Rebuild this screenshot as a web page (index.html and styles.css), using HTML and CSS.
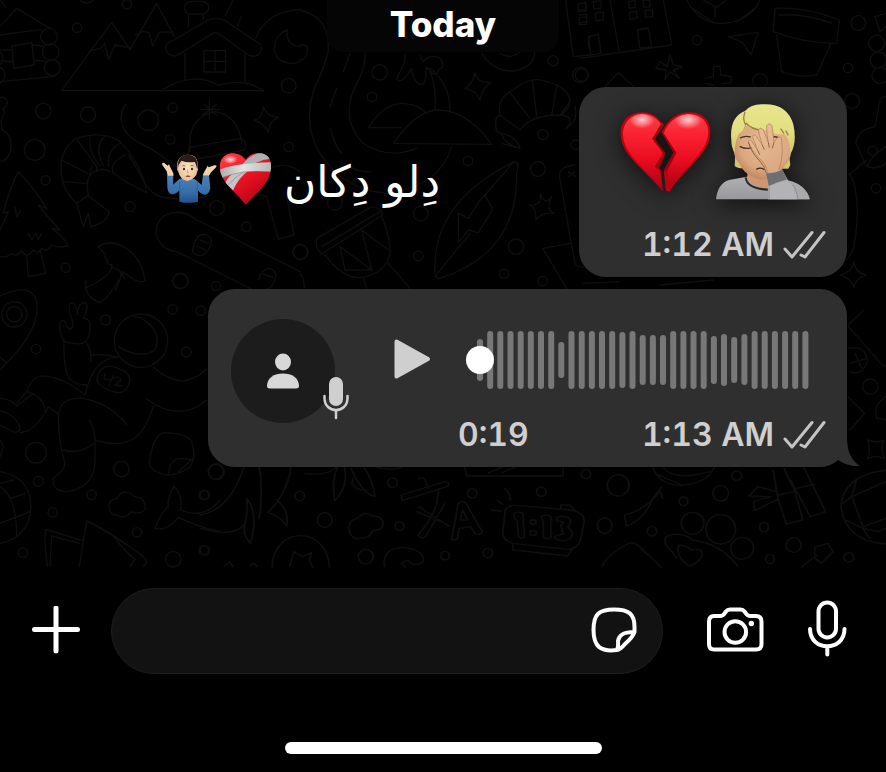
FILE: index.html
```html
<!DOCTYPE html>
<html lang="en">
<head>
<meta charset="utf-8">
<meta name="viewport" content="width=device-width, initial-scale=1">
<title>Chat</title>
<link rel="stylesheet" href="styles.css">
</head>
<body>
<main class="chat">
  <svg class="wallpaper" viewBox="0 0 886 568" preserveAspectRatio="xMidYMin slice" aria-hidden="true">
    <!-- top left: cabin, mountains, house, shrimp, tree -->
    <g transform="scale(.33333)" stroke-width="4">
      <path d="M0 80L50 25L150 85M0 105L125 88M35 138L95 128L103 195L42 205ZM0 150H35M0 182L38 186M97 135L130 138M103 180L138 184M0 245L165 229M0 0L18 22"/>
      <circle cx="147" cy="110" r="25"/><circle cx="152" cy="156" r="25"/><circle cx="157" cy="203" r="24"/><circle cx="-16" cy="175" r="25"/><circle cx="-10" cy="225" r="25"/>
      <path d="M185 272L272 152L335 68L390 148L470 10L522 108M272 152L300 145L314 130L326 178L345 135L385 142M405 106L428 94L447 98L458 138L478 96L518 96M185 272H790C750 245 710 240 655 256C610 228 550 230 490 268"/>
      <path d="M500 132L625 60Q650 48 675 62L780 132Q790 150 775 165Q765 172 745 165L655 100Q645 95 635 102L530 167Q510 170 500 155Q495 143 500 132ZM555 160V240M735 165V245M612 152H677V216H612ZM645 152V216M612 184H677M565 80V42M610 58V42M565 42Q550 35 556 15Q560 5 575 4H605Q625 5 626 22Q626 38 610 42ZM675 48L700 0M712 78L725 48"/>
      <path d="M768 112Q800 35 900 28M862 90C815 105 810 170 850 185Q875 195 900 185M862 90Q855 135 900 140"/>
      <circle cx="231" cy="83" r="14"/><circle cx="381" cy="13" r="14"/><circle cx="866" cy="257" r="22"/><circle cx="130" cy="333" r="23"/><circle cx="264" cy="344" r="23"/><circle cx="445" cy="361" r="31"/><circle cx="518" cy="323" r="14"/><circle cx="104" cy="450" r="31"/><circle cx="511" cy="418" r="14"/><circle cx="866" cy="441" r="14"/><circle cx="137" cy="541" r="14"/><circle cx="390" cy="620" r="15"/><circle cx="651" cy="624" r="22"/><circle cx="739" cy="680" r="14"/><circle cx="541" cy="843" r="22"/><circle cx="197" cy="803" r="14"/><circle cx="648" cy="858" r="14"/><circle cx="900" cy="756" r="22"/>
      <path d="M240 0Q260 18 282 0M0 292Q22 290 22 310Q20 320 8 325Q18 330 6 355Q0 370 8 390Q38 405 32 450Q25 480 0 485"/>
      <path d="M378 312C350 350 360 400 420 430C480 455 510 490 550 515M385 465C420 510 430 570 480 590Q540 605 620 590"/>
      <path d="M570 455Q560 350 645 335Q715 345 725 430M568 442L722 415Q745 425 733 450L578 480Q560 465 568 442M610 312L650 345M652 312L608 345M628 300V358M600 328H658"/>
      <path d="M790 320Q800 350 835 352Q805 365 805 398Q795 370 762 362Q790 350 790 320"/>
      <path d="M230 610C170 560 165 450 230 415Q310 390 360 425Q430 500 440 578Q380 550 340 520Q325 490 380 462M230 610L265 585Q255 540 275 520Q300 500 330 515M230 610L250 680L265 640L272 680Q320 670 328 635L265 588M185 480L262 520M190 545L258 550M232 420L290 500M270 410Q265 460 300 498M315 408Q280 440 310 496M360 430Q320 450 325 500M268 525L275 500M290 515V498"/>
      <path d="M55 515Q100 560 140 625L115 615Q150 660 180 690L155 685Q200 720 203 738Q170 745 155 735Q140 760 125 745Q115 765 100 750Q80 780 65 752Q50 775 35 760Q20 775 0 770M55 515Q30 560 10 640L25 635L0 690M80 765L85 830L137 820L122 755M45 620L50 650L62 630M85 700L95 720L108 700L115 718L125 700"/>
      <path d="M295 740C330 710 420 740 435 840Q430 850 405 840L365 815Q370 835 375 838L355 810Q335 805 335 795Q315 790 322 780Q310 770 318 765ZM335 795Q340 825 255 865M365 815Q360 850 345 870"/>
      <path d="M530 637Q470 640 468 700Q480 750 530 755L760 870M530 637Q560 635 590 660L900 815M580 740Q590 700 615 703Q640 710 632 735Q615 775 590 765Q572 760 580 740M598 720L625 730M590 738L618 750M775 840Q785 805 810 805Q835 815 825 840Q810 875 785 870M790 822L818 832"/>
      <path d="M800 510Q850 480 900 515M765 580L800 590L835 718L882 705L860 590"/>
    </g>
    <!-- top centre: road, beach, shell, drum, surfboard -->
    <g transform="translate(300) scale(.33333)" stroke-width="4">
      <path d="M0 30Q90 50 85 150Q75 200 45 260Q5 370 60 460Q130 570 260 580Q420 560 455 440M195 155Q200 200 165 260Q120 360 190 430Q260 480 350 445M150 160L130 215M110 265L90 320M92 385Q100 430 125 460M0 135Q30 130 20 160Q15 180 0 180M150 500Q180 520 215 515"/>
      <path d="M205 383Q250 310 310 310Q360 315 380 340M205 383H305M280 430Q350 330 415 330Q500 330 575 433ZM405 330Q410 250 385 205M450 335Q450 250 390 205M315 165Q320 180 290 235Q300 260 335 205Q340 255 370 253Q380 240 378 200Q410 240 415 210Q440 200 420 175Q390 160 370 185L360 165"/>
      <path d="M545 160Q580 215 640 213Q700 205 705 155M600 160Q630 180 660 155M797 0L820 170L870 165M835 10H858V33H835ZM838 52H860V73H838ZM870 150Q860 130 870 110"/>
      <circle cx="239" cy="217" r="23"/><circle cx="216" cy="291" r="14"/><circle cx="759" cy="182" r="15"/><circle cx="841" cy="225" r="23"/><circle cx="729" cy="404" r="15"/><circle cx="504" cy="483" r="14"/><circle cx="714" cy="507" r="22"/><circle cx="362" cy="641" r="22"/><circle cx="105" cy="608" r="22"/><circle cx="355" cy="768" r="14"/><circle cx="648" cy="740" r="23"/><circle cx="612" cy="821" r="14"/><circle cx="728" cy="843" r="14"/><circle cx="2" cy="756" r="22"/><circle cx="827" cy="434" r="14"/>
      <path d="M525 218Q530 250 573 248Q545 265 540 300Q528 270 495 265Q520 250 525 218M722 582Q735 620 755 590Q735 630 763 640Q725 635 708 660Q710 620 688 615Q725 620 722 582"/>
      <path d="M660 445Q610 430 605 400L590 395Q580 350 600 345Q590 290 640 270Q690 225 740 245Q800 260 810 300Q810 330 780 345Q830 350 800 385M605 400Q650 410 660 445L605 430M600 345L660 390M628 275L690 355M697 240L710 350M770 260L755 345M810 305L780 345M660 390Q690 345 780 345M825 320Q835 370 800 380"/>
      <path d="M640 487Q660 480 650 520Q655 760 420 835Q400 840 405 790Q410 600 640 487M640 487L555 585M405 830L510 700M555 585L578 628L535 698L505 690L475 728V640L505 655L540 600Z"/>
      <path d="M50 715L215 620Q245 625 248 645L65 762Q45 745 50 715M65 740L245 632M75 765Q130 840 190 832Q275 810 270 740Q260 680 245 650M120 740L135 810L215 810L185 690M120 740L215 810M185 690L265 750M190 835L200 865M265 790L330 865M0 820Q15 840 12 865"/>
      <path d="M825 495Q770 500 780 540L825 790Q835 805 850 800M805 515L825 530M823 515L807 530M728 745L810 730M728 745L800 865"/>
    </g>
    <!-- top right: building, globe, flower pot, guitar -->
    <g transform="translate(580) scale(.33333)" stroke-width="4">
      <path d="M0 175L275 135L250 0M90 0L118 155M25 110L55 103L63 160L32 165ZM172 90L205 84L215 140L180 144ZM0 10L18 8V28L0 30M40 5L63 2V25L42 27ZM0 45L20 42V65L0 68M45 40L70 37V60L48 62ZM145 5L165 2V22L148 25ZM190 0H210V20L192 22ZM148 37L170 34V55L150 58ZM195 32L218 30V50L197 52Z"/>
      <path d="M320 0Q360 75 430 70Q510 65 540 0M370 0L410 22L440 0M405 22V50M330 20L400 68M530 20L470 65M445 110L535 97L513 165L488 128ZM585 25Q680 20 778 60L770 130Q670 130 580 95ZM598 45Q680 40 755 70M590 105L605 215Q660 235 710 225L752 132M885 50L918 40M885 50L900 95L918 80"/>
      <circle cx="351" cy="120" r="14"/><circle cx="835" cy="69" r="22"/><circle cx="804" cy="204" r="14"/><circle cx="5" cy="225" r="19"/><circle cx="540" cy="243" r="22"/><circle cx="816" cy="303" r="22"/><circle cx="888" cy="565" r="14"/><circle cx="878" cy="453" r="14"/><circle cx="890" cy="130" r="24"/><circle cx="895" cy="180" r="24"/><circle cx="900" cy="226" r="24"/>
      <path d="M262 200L270 165L280 195L308 200L280 210L298 235L270 215L255 240L258 210L228 205L240 185ZM75 260L115 218L160 258M375 235L400 230V200L420 198L422 225L455 230L452 248L425 250M400 255L375 250Z"/>
      <path d="M918 290Q895 290 895 330L885 380Q830 390 828 430L860 500Q890 510 918 490M860 480L805 525M808 520Q845 580 825 720Q820 760 800 780M860 500Q880 460 918 440M822 785Q825 820 860 825Q825 835 822 863Q815 835 780 825Q815 820 822 785"/>
      <path d="M240 855L400 840M10 850L120 845"/>
    </g>
    <!-- left: rocket, astronaut, tag, ball -->
    <g transform="translate(0 280) scale(.33333)" stroke-width="4">
      <path d="M0 48Q80 10 105 50Q130 110 60 205L0 270M0 232L20 248"/><circle cx="43" cy="103" r="38"/><circle cx="43" cy="103" r="23"/>
      <path d="M258 0Q250 50 300 68Q330 50 355 0"/>
      <path d="M190 180Q170 130 185 122Q195 115 200 140L210 148Q225 140 215 115Q200 75 215 68Q228 65 232 105Q235 65 255 68Q270 75 250 115Q275 115 270 150Q265 200 220 190Q200 190 190 180M192 180C190 280 200 315 260 315M258 185Q275 210 273 245M275 225Q300 220 355 232Q280 230 255 345Q180 285 120 288Q90 300 80 335L50 370M80 335Q135 350 135 400L145 380L175 403M130 405Q100 455 60 458M0 355Q30 355 50 378L100 340M0 392Q40 400 60 440Q60 460 40 455L0 435M175 405Q180 350 250 355Q330 370 380 433M175 405Q175 490 195 550Q195 570 160 595Q155 635 205 635Q285 620 285 540V475M190 510Q240 525 282 490M268 420Q280 440 285 475M285 480C380 510 430 480 460 378M440 357Q540 430 620 360M460 262C530 320 570 310 620 268"/>
      <circle cx="423" cy="182" r="80"/><path d="M355 200Q420 240 465 210Q485 160 440 125Q420 110 400 110M440 125Q480 160 470 200"/>
      <path d="M320 260Q340 255 375 275Q400 295 380 325Q370 340 350 338Q300 325 290 300Q295 265 320 260M315 280L312 297L333 300M340 285L328 315M340 295Q360 285 362 300L345 315L365 318"/>
      <path d="M490 458Q560 460 575 485Q590 530 570 560Q530 590 490 583Q440 570 450 535Q460 470 490 458M575 540Q510 520 505 583M535 575L575 540"/>
      <circle cx="108" cy="518" r="31"/><circle cx="364" cy="567" r="23"/><circle cx="317" cy="120" r="15"/><circle cx="108" cy="207" r="14"/><circle cx="518" cy="88" r="14"/><circle cx="602" cy="92" r="14"/><circle cx="559" cy="216" r="15"/><circle cx="541" cy="3" r="23"/><circle cx="115" cy="604" r="15"/><circle cx="275" cy="644" r="14"/><circle cx="158" cy="697" r="14"/><circle cx="411" cy="757" r="14"/><circle cx="615" cy="645" r="14"/><circle cx="69" cy="818" r="14"/><circle cx="615" cy="811" r="14"/><circle cx="520" cy="838" r="23"/><circle cx="649" cy="575" r="24"/>
      <path d="M0 575Q90 590 93 680Q90 770 0 790M0 610L40 600M0 620Q50 650 50 770M35 655L75 640M0 730L90 695M0 480L10 500L0 530"/>
      <path d="M330 690Q320 660 350 655Q370 620 405 650Q440 655 435 690Q415 705 395 695Q370 720 350 705Q330 705 330 690M142 860Q130 760 138 748L248 782M150 860L155 768L240 790M238 860L260 722L340 768Q370 810 405 838L390 860M260 722Q340 760 430 830Q450 845 430 858M340 768L380 795"/>
      <path d="M522 618Q500 660 505 680Q480 700 465 745Q500 755 535 712Q590 740 660 755M522 618Q550 650 542 690Q610 720 660 660"/>
    </g>
    <!-- right edge beside the voice message -->
    <g transform="translate(450 310) scale(.33333)" stroke-width="4">
      <path d="M1195 45L1240 0M1195 50L1280 145Q1300 175 1308 165M1195 115Q1250 105 1252 155Q1235 200 1200 185M1215 130L1235 175M1200 160L1250 145M1195 262L1243 310L1200 360M1308 260Q1270 280 1280 325L1308 330M1252 390Q1280 400 1300 392Q1290 415 1302 445Q1280 435 1252 445Q1265 420 1252 390"/><circle cx="1261" cy="230" r="23"/>
    </g>
    <!-- lower band: whale, letters, clock, bamboo, volleyball -->
    <g transform="translate(200 460) scale(.4375 .33333)" stroke-width="4">
      <path d="M100 20Q70 150 0 165M0 205Q80 235 103 190Q110 160 107 115Q135 160 115 250Q95 220 103 190M135 20Q145 90 135 175M208 20Q200 100 155 158M175 120Q205 150 198 198Q180 165 155 158"/>
      <path d="M240 40Q290 50 315 20Q300 60 308 122Q340 80 330 22M345 25Q370 100 400 110Q395 60 375 22M350 55Q340 80 370 90M400 20Q430 35 460 22"/>
      <path d="M340 205Q340 180 360 175Q375 150 395 168Q420 170 418 190Q420 210 395 212Q385 240 355 235Q340 225 340 205M165 322C165 200 290 190 296 322M205 320L215 275L235 290L255 278L250 300L258 322M422 320Q415 265 465 262Q515 270 510 305Q490 325 475 300L460 310L470 322M55 320L68 305L75 320M115 320Q120 300 130 320"/>
      <path d="M460 105L560 65Q575 70 565 80L462 122ZM500 55Q510 48 515 62L522 85M545 85Q545 160 498 225Q510 245 520 220L560 130M500 140L570 200M495 155L568 195M575 240L590 130Q600 118 608 130L645 215Q640 228 630 222L618 200L592 205L588 238ZM595 180L600 150L612 180Z"/>
      <path d="M718 136L850 150Q880 160 878 185L870 240Q860 270 840 268L715 250Q690 240 692 215L698 150Q705 135 718 136M715 252V270L840 288L850 268M825 145V135L845 135L858 152M697 85Q712 105 708 120M680 122L692 133M665 150L688 153M718 160Q725 152 738 160L742 230Q735 240 728 230L725 180Q715 178 718 160M755 180H768V192H755ZM755 212H768V225H755ZM780 170Q790 160 802 170V232Q795 242 785 232V190ZM818 170Q845 165 848 185Q845 195 840 200Q855 215 848 235Q830 250 810 235Q810 225 832 222Q825 205 825 195L832 188L815 182Z"/>
      <path d="M605 22L610 48H830V25M660 38L690 22M690 38L720 22M1035 22Q1050 75 1100 76Q1160 70 1175 22M1040 40L1100 75M1060 22Q1080 65 1165 35M1055 80L1035 115Q1015 180 975 198L970 165Q1020 150 1050 95M1050 90L1058 115M920 320Q925 290 980 250Q990 245 1000 255L1055 322M1068 260Q1050 225 1090 222Q1115 225 1125 240Q1190 250 1230 320M1068 260Q1080 275 1090 295M1095 255Q1120 260 1120 270Q1150 260 1148 285Q1140 310 1118 318Q1085 290 1095 255"/>
      <path d="M1310 30L1320 110L1340 192L1378 180L1360 95L1335 25M1350 60L1395 170L1430 155L1400 75L1380 22M1322 105L1360 95M1365 85L1405 72M1318 95L1275 80L1255 108L1305 110L1265 125L1268 152L1320 118M1405 262L1435 250L1447 275L1420 310L1405 295ZM1375 322L1410 285"/>
      <path d="M1568 30Q1470 45 1465 140Q1475 245 1568 252M1500 62L1490 110L1568 65M1490 110L1515 200L1568 175M1475 180L1515 205L1530 235M1490 110L1470 130M1515 205L1550 215L1568 205"/>
      <ellipse cx="36" cy="35" rx="17" ry="22"/><ellipse cx="9" cy="105" rx="11" ry="14"/><ellipse cx="228" cy="108" rx="11" ry="14"/><ellipse cx="285" cy="180" rx="17" ry="22"/><ellipse cx="440" cy="68" rx="11" ry="14"/><ellipse cx="456" cy="198" rx="10" ry="13"/><ellipse cx="379" cy="290" rx="17" ry="22"/><ellipse cx="560" cy="287" rx="10" ry="13"/><ellipse cx="622" cy="100" rx="11" ry="14"/><ellipse cx="658" cy="279" rx="11" ry="14"/><ellipse cx="780" cy="95" rx="11" ry="14"/><ellipse cx="882" cy="42" rx="11" ry="14"/><ellipse cx="956" cy="76" rx="25" ry="32"/><ellipse cx="925" cy="197" rx="17" ry="23"/><ellipse cx="1033" cy="214" rx="11" ry="14"/><ellipse cx="1105" cy="124" rx="10" ry="13"/><ellipse cx="1190" cy="100" rx="18" ry="23"/><ellipse cx="1227" cy="47" rx="11" ry="14"/><ellipse cx="1126" cy="190" rx="26" ry="33"/><ellipse cx="1190" cy="208" rx="34" ry="44"/><ellipse cx="1239" cy="265" rx="26" ry="33"/><ellipse cx="1289" cy="201" rx="10" ry="14"/><ellipse cx="1357" cy="255" rx="17" ry="22"/><ellipse cx="1303" cy="297" rx="10" ry="14"/><ellipse cx="1483" cy="292" rx="11" ry="14"/><ellipse cx="9" cy="271" rx="11" ry="14"/>
    </g>
  </svg>

  <h1 class="date">Today</h1>

  <section class="row">
    <p class="caption" dir="rtl">
      <span class="caption-text" lang="ur">دِلو دِکان</span>
      <span class="caption-emoji">
      <svg width="53" height="52" viewBox="200 66 159 156" role="img" aria-label="Mending heart">
        <defs>
          <linearGradient id="mh" x1="0" y1="0" x2=".7" y2="1"><stop offset="0" stop-color="#ff4a50"/><stop offset=".45" stop-color="#f51626"/><stop offset="1" stop-color="#b00014"/></linearGradient>
          <linearGradient id="band" x1="0" y1="0" x2="1" y2="0"><stop offset="0" stop-color="#a9abab"/><stop offset=".45" stop-color="#e2e3e3"/><stop offset="1" stop-color="#b4b5b6"/></linearGradient>
          <radialGradient id="shine"><stop offset="0" stop-color="#fff" stop-opacity=".85"/><stop offset="1" stop-color="#fff" stop-opacity="0"/></radialGradient>
          <clipPath id="mhc"><path d="M280 86C266 66 238 62 222 71C198 83 198 118 212 142C228 172 256 190 280 221C306 191 337 169 350 137C361 108 357 80 338 70C316 62 293 66 280 86Z"/></clipPath>
        </defs>
        <g clip-path="url(#mhc)">
          <rect x="195" y="60" width="170" height="170" fill="url(#mh)"/>
          <ellipse cx="234" cy="86" rx="22" ry="13" fill="url(#shine)"/>
          <path d="M268 102Q300 65 330 66L358 82L310 96L290 105Z" fill="#aeb0b2"/>
          <path d="M335 86L362 84V100L300 100Z" fill="#e01525"/>
          <path d="M288 119Q260 138 242 178L218 155Q230 135 245 124Z" fill="#c3c5c6"/>
          <path d="M200 117Q245 95 362 94V123Q270 113 205 142Z" fill="url(#band)"/>
          <path d="M203 142Q270 113 362 123M226 164Q245 140 276 121" fill="none" stroke="#7e4b50" stroke-width="1.5" opacity=".7"/>
        </g>
      </svg>
      <svg width="56" height="50" viewBox="30 72 168 150" role="img" aria-label="Man shrugging">
        <defs><linearGradient id="shirt" x1="0" y1="0" x2="0" y2="1"><stop offset="0" stop-color="#4b83b9"/><stop offset=".6" stop-color="#396fa8"/><stop offset="1" stop-color="#20518d"/></linearGradient><radialGradient id="skin"><stop offset="0" stop-color="#ffe5c5"/><stop offset="1" stop-color="#e8bd94"/></radialGradient></defs>
        <path d="M48 136L67 134L66 164L85 147Q109 139 131 147L152 165L156 134L174 137L178 175Q174 195 160 194Q148 192 141 181V215Q110 222 85 215V181Q76 194 60 193Q48 187 49 165Z" fill="url(#shirt)"/>
        <path d="M86 154L87 190M139 154L138 190" stroke="#285985" stroke-width="2"/>
        <path d="M50 137L47 124L34 105Q31 97 39 98L50 107L54 103L59 114L67 130V137ZM155 136L160 125L166 115L170 107L173 112L190 106Q201 105 194 113L179 128L174 137Z" fill="#f3d2aa"/>
        <path d="M94 138H124V147Q109 156 94 147Z" fill="#dcae86"/>
        <path d="M78 113Q76 78 107 74Q144 72 140 113Q143 116 139 124Q136 146 110 153Q86 147 82 125Q78 121 78 113Z" fill="url(#skin)"/>
        <path d="M80 117Q77 74 109 74Q145 75 139 118Q136 107 132 96Q105 98 91 92Q82 102 80 117Z" fill="#281c1b"/>
        <path d="M94 108Q98 105 103 108M118 108Q123 105 128 108" fill="none" stroke="#594033" stroke-width="2"/>
        <ellipse cx="99" cy="117" rx="3" ry="4" fill="#251c1c"/><ellipse cx="123" cy="117" rx="3" ry="4" fill="#251c1c"/><path d="M110 118L108 127H114" fill="none" stroke="#c59067" stroke-width="2"/><path d="M103 139Q110 134 119 139Q112 142 103 139Z" fill="#61221f"/>
      </svg>
      </span>
    </p>

    <article class="bubble bubble-emoji">
      <div class="emoji-pair">
        <svg width="94" height="84" viewBox="30 60 282 252" role="img" aria-label="Broken heart">
          <defs>
            <linearGradient id="bh" x1="0" y1="0" x2="0" y2="1"><stop offset="0" stop-color="#f8404a"/><stop offset=".25" stop-color="#fb2433"/><stop offset=".6" stop-color="#ea0d20"/><stop offset="1" stop-color="#a80012"/></linearGradient>
            <radialGradient id="gloss" cy=".3"><stop offset="0" stop-color="#fff" stop-opacity=".75"/><stop offset="1" stop-color="#fff" stop-opacity="0"/></radialGradient>
          </defs>
          <path d="M152 92C130 61 82 59 55 82C26 110 31 154 54 188C82 228 124 258 162 304L155 240L145 231L169 190L137 147L166 103Z" fill="#c5000e"/>
          <path d="M148 93C124 66 84 64 60 87C34 114 38 150 58 182C84 223 125 254 160 298L149 240L138 230L162 189L130 146L156 103Z" fill="url(#bh)"/>
          <path d="M158 127C182 75 222 60 262 69C310 83 313 135 290 174C262 220 210 256 181 305L171 301L164 242L194 188Z" fill="#c5000e"/>
          <path d="M164 129C186 80 223 66 258 74C302 86 307 132 285 170C257 216 210 251 181 300L176 242L202 188Z" fill="url(#bh)"/>
          <path d="M130 146L162 189L138 230L149 240L169 190L137 147L166 103L156 103ZM158 129L194 188L164 242L172 244L202 188L164 131Z" fill="#9d000b"/>
          <ellipse cx="99" cy="100" rx="38" ry="27" fill="url(#gloss)"/><ellipse cx="237" cy="101" rx="42" ry="28" fill="url(#gloss)"/>
        </svg>
        <svg width="97" height="97" viewBox="315 40 291 291" role="img" aria-label="Person facepalming">
          <defs>
            <linearGradient id="hair" x1="0" y1="0" x2="0" y2="1"><stop offset="0" stop-color="#e9e58e"/><stop offset=".55" stop-color="#e2de80"/><stop offset="1" stop-color="#d2c46d"/></linearGradient>
            <radialGradient id="face" cx=".55" cy=".4" r=".65"><stop offset="0" stop-color="#e8bd93"/><stop offset=".65" stop-color="#dba87f"/><stop offset="1" stop-color="#bb7f5c"/></radialGradient>
            <linearGradient id="hand" x1="0" y1="0" x2=".5" y2="1"><stop offset="0" stop-color="#edc298"/><stop offset="1" stop-color="#dbaa84"/></linearGradient>
            <linearGradient id="tee" x1="0" y1="0" x2="0" y2="1"><stop offset="0" stop-color="#b0b0b2"/><stop offset="1" stop-color="#98989b"/></linearGradient>
          </defs>
          <path d="M376 190L374 229Q383 237 402 236L535 237L541 226L536 185Z" fill="#d2c46d"/>
          <path d="M318 329Q323 282 357 271L410 261L490 263L548 280Q587 287 599 329Z" fill="url(#tee)"/>
          <path d="M414 240H477V294Q424 294 411 265Z" fill="#cf966f"/>
          <path d="M407 263Q410 298 479 300" fill="none" stroke="#29292b" stroke-width="6"/>
          <path d="M370 170Q367 91 458 90Q548 92 545 180Q541 213 526 225Q501 268 458 270Q406 263 387 220Q370 203 370 170Z" fill="url(#face)"/>
          <path d="M364 152Q357 83 405 64Q424 42 460 44Q531 41 550 104Q562 160 541 193Q539 145 523 133Q493 138 461 119Q430 124 405 105Q403 122 387 132Q375 152 374 190Q364 173 364 152Z" fill="url(#hair)"/>
          <path d="M405 67Q396 91 408 106M408 100Q422 119 459 122M522 132L512 117M535 137L527 123" fill="none" stroke="#9b833e" stroke-width="4"/>
          <path d="M390 146Q402 137 422 142M389 170Q407 180 427 174M484 144Q498 137 509 147" fill="none" stroke="#48332b" stroke-width="4"/>
          <path d="M439 239Q452 231 463 240" fill="none" stroke="#3c231e" stroke-width="4"/>
          <path d="M472 251Q470 219 445 205Q425 181 415 157Q415 148 424 153L442 180Q433 155 427 140Q432 131 440 141L456 164Q448 137 445 121Q452 110 460 121L475 158Q469 132 470 108Q478 97 486 108L492 158L502 144Q512 138 515 150L517 185Q516 217 507 239L515 250Z" fill="url(#hand)" stroke="#a97856" stroke-width="2"/>
          <path d="M442 180L449 195M456 164L463 180M475 158L478 174M492 158L487 176M415 157Q424 190 452 217Q463 229 468 249" fill="none" stroke="#8e6147" stroke-width="3"/>
          <path d="M468 251Q494 250 517 240L534 272Q567 279 585 301Q597 313 599 329H475L473 288Z" fill="#aaa9ac"/>
          <path d="M468 251Q496 251 517 240L531 269Q506 276 477 292Z" fill="#6f6f72"/>
          <path d="M475 290Q507 274 533 273L548 289L561 329H476Z" fill="#b3b2b5"/>
          <path d="M477 292L478 329M548 285Q560 300 564 329" fill="none" stroke="#838287" stroke-width="2"/>
        </svg>
      </div>
      <div class="meta meta-end">
        <time>1:12 AM</time>
        <svg class="ticks" viewBox="0 0 44 30" role="img" aria-label="Delivered"><path d="M3 19L10 27L30 2.5M19 25L23 27L42 2.5"/></svg>
      </div>
    </article>
  </section>

  <article class="bubble bubble-voice">
    <svg class="tail" width="44" height="46" viewBox="0 0 44 46" aria-hidden="true"><path d="M0 0H30V14C30 30 34 38 43 44Q31 45 21 38Q14 44 0 45Z"/></svg>
    <div class="avatar">
      <svg width="34" height="36" viewBox="0 0 34 36" role="img" aria-label="Sender"><ellipse cx="17" cy="9" rx="8" ry="8.5"/><path d="M1 33C1 25 8 20.5 17 20.5S33 25 33 33Q33 35.5 30 35.5H4Q1 35.5 1 33Z"/></svg>
      <svg class="badge" width="28" height="44" viewBox="0 0 28 44" aria-hidden="true"><rect x="7" y="1" width="14" height="29" rx="7"/><path d="M2.5 20V22C2.5 38 25.5 38 25.5 22V20M14 34V42" fill="none" stroke="#cfcfcf" stroke-width="2.5" stroke-linecap="round"/></svg>
    </div>
    <button class="play" type="button" aria-label="Play">
      <svg width="38" height="42" viewBox="0 0 38 42"><path d="M3.5 3.5L35 21L3.5 38.5Z" stroke-width="4" stroke-linejoin="round"/></svg>
    </button>
    <div class="track">
      <div class="wave">
        <svg viewBox="0 0 343 58" preserveAspectRatio="none" aria-hidden="true">
          <path d="M14 11V47M24.2 3V55M34.3 3V55M44.5 3V55M54.7 3V55M64.8 3V55M75 3V55M85.2 3V55M95.3 14V44M105.5 3V55M115.7 3V55M125.9 3V55M136 3V55M146.2 3V55M156.4 4V54M166.5 3V55M176.7 7V51M186.9 7V51M197 7V51M207.2 3V55M217.4 3V55M227.5 3V55M237.7 3V55M247.9 8V50M258 6V52M268.2 9V49M278.4 6V51M288.6 3V55M298.7 3V55M308.9 3V55M319.1 3V55M329.2 3V55M339.4 3V55"/>
        </svg>
        <input class="seek" type="range" min="0" max="19" value="0" aria-label="Playback position">
      </div>
      <div class="meta">
        <span class="length">0:19</span>
        <time>1:13 AM</time>
        <svg class="ticks" viewBox="0 0 44 30" role="img" aria-label="Delivered"><path d="M3 19L10 27L30 2.5M19 25L23 27L42 2.5"/></svg>
      </div>
    </div>
  </article>
</main>

<footer class="dock">
  <form class="composer">
    <button type="button" aria-label="Attach"><svg width="48" height="50" viewBox="0 0 48 50"><path d="M24 2V45M2.5 23.5H45.5" stroke-width="5"/></svg></button>
    <div class="field">
      <input type="text" aria-label="Message">
      <button type="button" aria-label="Stickers"><svg width="48" height="50" viewBox="0 0 48 50"><path d="M27 44C11 46 3.5 41 3.5 24C3.5 8 9 3.5 24 3.5C39 3.5 44.5 8 44.5 21V26Q43 31 35 38Q30 44 27 44C29 40 28 37 28 35C29 29 33 26 44 26"/></svg></button>
    </div>
    <button type="button" aria-label="Camera"><svg width="58" height="50" viewBox="0 0 58 50"><path d="M8 10H14Q17 10 18.5 7.5L20 5.5Q21.5 3.5 24 3.5H34.5Q37 3.5 38.5 5.5L40 7.5Q41.5 10 44.5 10H50Q55.5 10 55.5 15.5V38Q55.5 43.5 50 43.5H8Q3 43.5 3 38V15.5Q3 10 8 10Z"/><circle cx="29.3" cy="26" r="10.8"/><circle cx="45.3" cy="17.5" r="2.7" class="solid"/></svg></button>
    <button type="button" aria-label="Record voice message"><svg width="40" height="64" viewBox="0 0 40 64"><rect x="11.5" y="3.5" width="17.5" height="35" rx="8.7"/><path d="M3 30C3 53 37.5 53 37.5 30M20.3 48V55.5"/></svg></button>
  </form>
  <div class="home-indicator"></div>
</footer>
</body>
</html>
```

FILE: styles.css
```css
* { box-sizing: border-box; }

body {
  margin: 0;
  min-height: 100vh;
  display: flex;
  flex-direction: column;
  background: #000;
  color: #fff;
  font-family: Inter, "Liberation Sans", sans-serif;
}

button {
  display: flex;
  padding: 0;
  border: 0;
  background: none;
  color: inherit;
}

svg {
  display: block;
  flex-shrink: 0;
}

.chat {
  position: relative;
  flex: 1;
  display: flex;
  flex-direction: column;
  padding-right: 39px;
  overflow: hidden;
}

.wallpaper {
  position: absolute;
  inset: 0;
  width: 100%;
  height: 100%;
  fill: none;
  stroke: #0f0f0f;
  stroke-linecap: round;
  stroke-linejoin: round;
}

.date {
  position: relative;
  align-self: center;
  margin: 0 -39px 35px 0;
  padding-bottom: 4px;
  width: 232px;
  border-radius: 0 0 16px 16px;
  background: #050505;
  font-size: 35px;
  font-weight: 800;
  line-height: 48px;
  text-align: center;
}

.row {
  position: relative;
  display: flex;
  justify-content: flex-end;
  align-items: center;
  gap: 139px;
  margin-bottom: 12px;
}

.caption {
  display: flex;
  align-items: center;
  gap: 12px;
  margin: 0;
}

.caption-emoji {
  display: flex;
  align-items: center;
  gap: 2px;
  padding-bottom: 7px;
}

.caption-text {
  font-family: "DejaVu Sans", sans-serif;
  font-size: 44px;
  line-height: 72px;
  white-space: nowrap;
}

.bubble {
  border-radius: 27px;
  background: #2f2f2f;
}

.bubble-emoji {
  width: 268px;
  padding: 16px 21px 12px;
}

.emoji-pair {
  display: flex;
  justify-content: flex-end;
  align-items: center;
  gap: 2px;
  margin: 0 14px 25px 0;
}

.emoji-pair svg { filter: drop-shadow(0 4px 12px rgba(0, 0, 0, .7)); }

.meta {
  display: flex;
  align-items: center;
  color: #cfcfcf;
  font-size: 32px;
  font-weight: 600;
  font-variant-numeric: tabular-nums;
  line-height: 40px;
}

.meta-end { justify-content: flex-end; }

.ticks {
  width: 44px;
  height: 30px;
  margin-left: 8px;
  fill: none;
  stroke: #c4c4c4;
  stroke-width: 3;
  stroke-linecap: round;
  stroke-linejoin: round;
}

.bubble-voice {
  position: relative;
  align-self: flex-end;
  display: flex;
  align-items: flex-start;
  width: 639px;
  padding: 30px 21px 12px 23px;
}

.avatar {
  position: relative;
  display: grid;
  place-items: center;
  width: 104px;
  height: 104px;
  border-radius: 50%;
  background: #1c1c1c;
  fill: #d8d8d8;
}

.badge {
  position: absolute;
  right: -15px;
  bottom: 3px;
  fill: #cfcfcf;
}

.play {
  margin: 19px 27px 0 58px;
  fill: #cfcfcf;
  stroke: #cfcfcf;
}

.track {
  position: relative;
  flex: 1;
}

.wave {
  position: relative;
  margin: 12px 17px 26px 8px;
}

.wave svg {
  width: 100%;
  height: 58px;
  stroke: #787878;
  stroke-width: 6;
  stroke-linecap: round;
}

.seek {
  position: absolute;
  inset: 0;
  width: 100%;
  height: 57px;
  margin: 0;
  appearance: none;
  background: none;
}

.seek::-webkit-slider-thumb {
  appearance: none;
  width: 28px;
  height: 28px;
  border-radius: 50%;
  background: #fff;
}

.length { margin-right: auto; }

.tail {
  position: absolute;
  right: -14px;
  bottom: -1px;
  fill: #2f2f2f;
}

.dock { padding-top: 20px; }

.composer {
  display: flex;
  align-items: center;
  gap: 43px;
  padding: 0 39px 0 32px;
}

.composer svg {
  fill: none;
  stroke: #fff;
  stroke-width: 4;
  stroke-linecap: round;
  stroke-linejoin: round;
}

.composer .solid {
  fill: #fff;
  stroke: none;
}

.field {
  flex: 1;
  display: flex;
  align-items: center;
  min-width: 0;
  height: 86px;
  margin-left: -12px;
  padding: 0 24px;
  border: 1px solid #1e1e1e;
  border-radius: 43px;
  background: #121212;
}

.field input {
  flex: 1;
  min-width: 0;
  height: 60px;
  border: 0;
  outline: 0;
  background: none;
  color: #fff;
  font: 500 33px/40px Inter, sans-serif;
}

.home-indicator {
  width: 317px;
  height: 12px;
  margin: 68px auto 18px;
  border-radius: 6px;
  background: #fff;
}
```
